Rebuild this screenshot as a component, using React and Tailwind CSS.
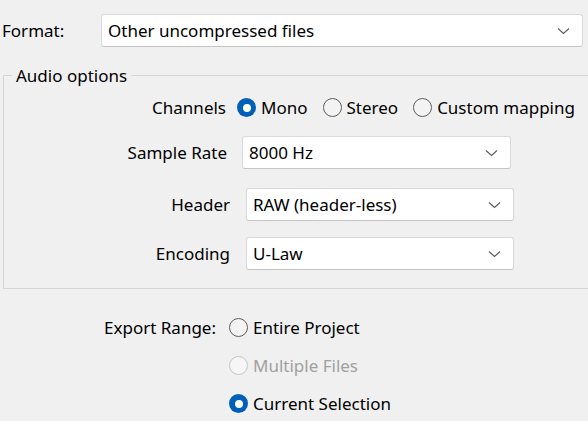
import React from "react";

function Chevron() {
  return (
    <svg width="13" height="8" viewBox="0 0 13 8" className="shrink-0">
      <path d="M1 1.5 L6.5 6.5 L12 1.5" fill="none" stroke="#5f5f5f" strokeWidth="1.2" />
    </svg>
  );
}

function Select({ value, className = "" }) {
  return (
    <div
      className={`flex items-center justify-between bg-white border border-[#d9d9d9] border-b-[#c4c4c4] rounded-[3px] pl-[6px] pr-[12px] ${className}`}
    >
      <span className="text-black">{value}</span>
      <Chevron />
    </div>
  );
}

function Radio({ label, checked, disabled, className = "" }) {
  return (
    <div className={`flex items-center ${className}`}>
      {checked ? (
        <span className="w-[19px] h-[19px] rounded-full bg-[#005fb8] flex items-center justify-center shrink-0">
          <span className="w-[8px] h-[8px] rounded-full bg-white" />
        </span>
      ) : disabled ? (
        <span className="w-[19px] h-[19px] rounded-full border-[1.5px] border-[#c6c6c6] bg-[#f6f6f6] shrink-0" />
      ) : (
        <span className="w-[19px] h-[19px] rounded-full border-[1.5px] border-[#5d5d5d] bg-[#f3f3f3] shrink-0" />
      )}
      <span className={`ml-[5px] ${disabled ? "text-[#a0a0a0]" : "text-black"}`}>{label}</span>
    </div>
  );
}

export default function App() {
  return (
    <div
      className="w-[588px] h-[421px] overflow-hidden bg-[#f0f0f0] text-[17px] leading-none text-black"
      style={{ fontFamily: '"Noto Sans", "Open Sans", sans-serif' }}
    >
      {/* Format */}
      <div className="flex items-center pt-[14px] pr-[5px]">
        <span className="w-[101px] pl-[2px]">Format:</span>
        <Select value="Other uncompressed files" className="flex-1 h-[33px]" />
      </div>

      {/* Audio options group */}
      <fieldset className="mt-[20px] ml-[3px] -mr-[20px] border border-[#d6d6d6] h-[222px] px-0">
        <legend className="ml-[8px] px-[4px] leading-none">Audio options</legend>
        <div className="flex items-center mt-[14px]">
          <span className="w-[222px] text-right">Channels</span>
          <Radio label="Mono" checked className="ml-[11px]" />
          <Radio label="Stereo" className="ml-[15px]" />
          <Radio label="Custom mapping" className="ml-[15px]" />
        </div>
        <div className="flex items-center mt-[19px]">
          <span className="w-[223px] text-right">Sample Rate</span>
          <Select value="8000 Hz" className="ml-[15px] w-[269px] h-[33px]" />
        </div>
        <div className="flex items-center mt-[19px]">
          <span className="w-[226px] text-right">Header</span>
          <Select value="RAW (header-less)" className="ml-[16px] w-[268px] h-[33px]" />
        </div>
        <div className="flex items-center mt-[16px]">
          <span className="w-[226px] text-right">Encoding</span>
          <Select value="U-Law" className="ml-[16px] w-[268px] h-[33px]" />
        </div>
      </fieldset>

      {/* Export range */}
      <div className="flex mt-[29px]">
        <span className="w-[216px] text-right h-[19px] flex items-center justify-end">Export Range:</span>
        <div className="flex flex-col gap-[19px] ml-[13px]">
          <Radio label="Entire Project" />
          <Radio label="Multiple Files" disabled />
          <Radio label="Current Selection" checked />
        </div>
      </div>
    </div>
  );
}
